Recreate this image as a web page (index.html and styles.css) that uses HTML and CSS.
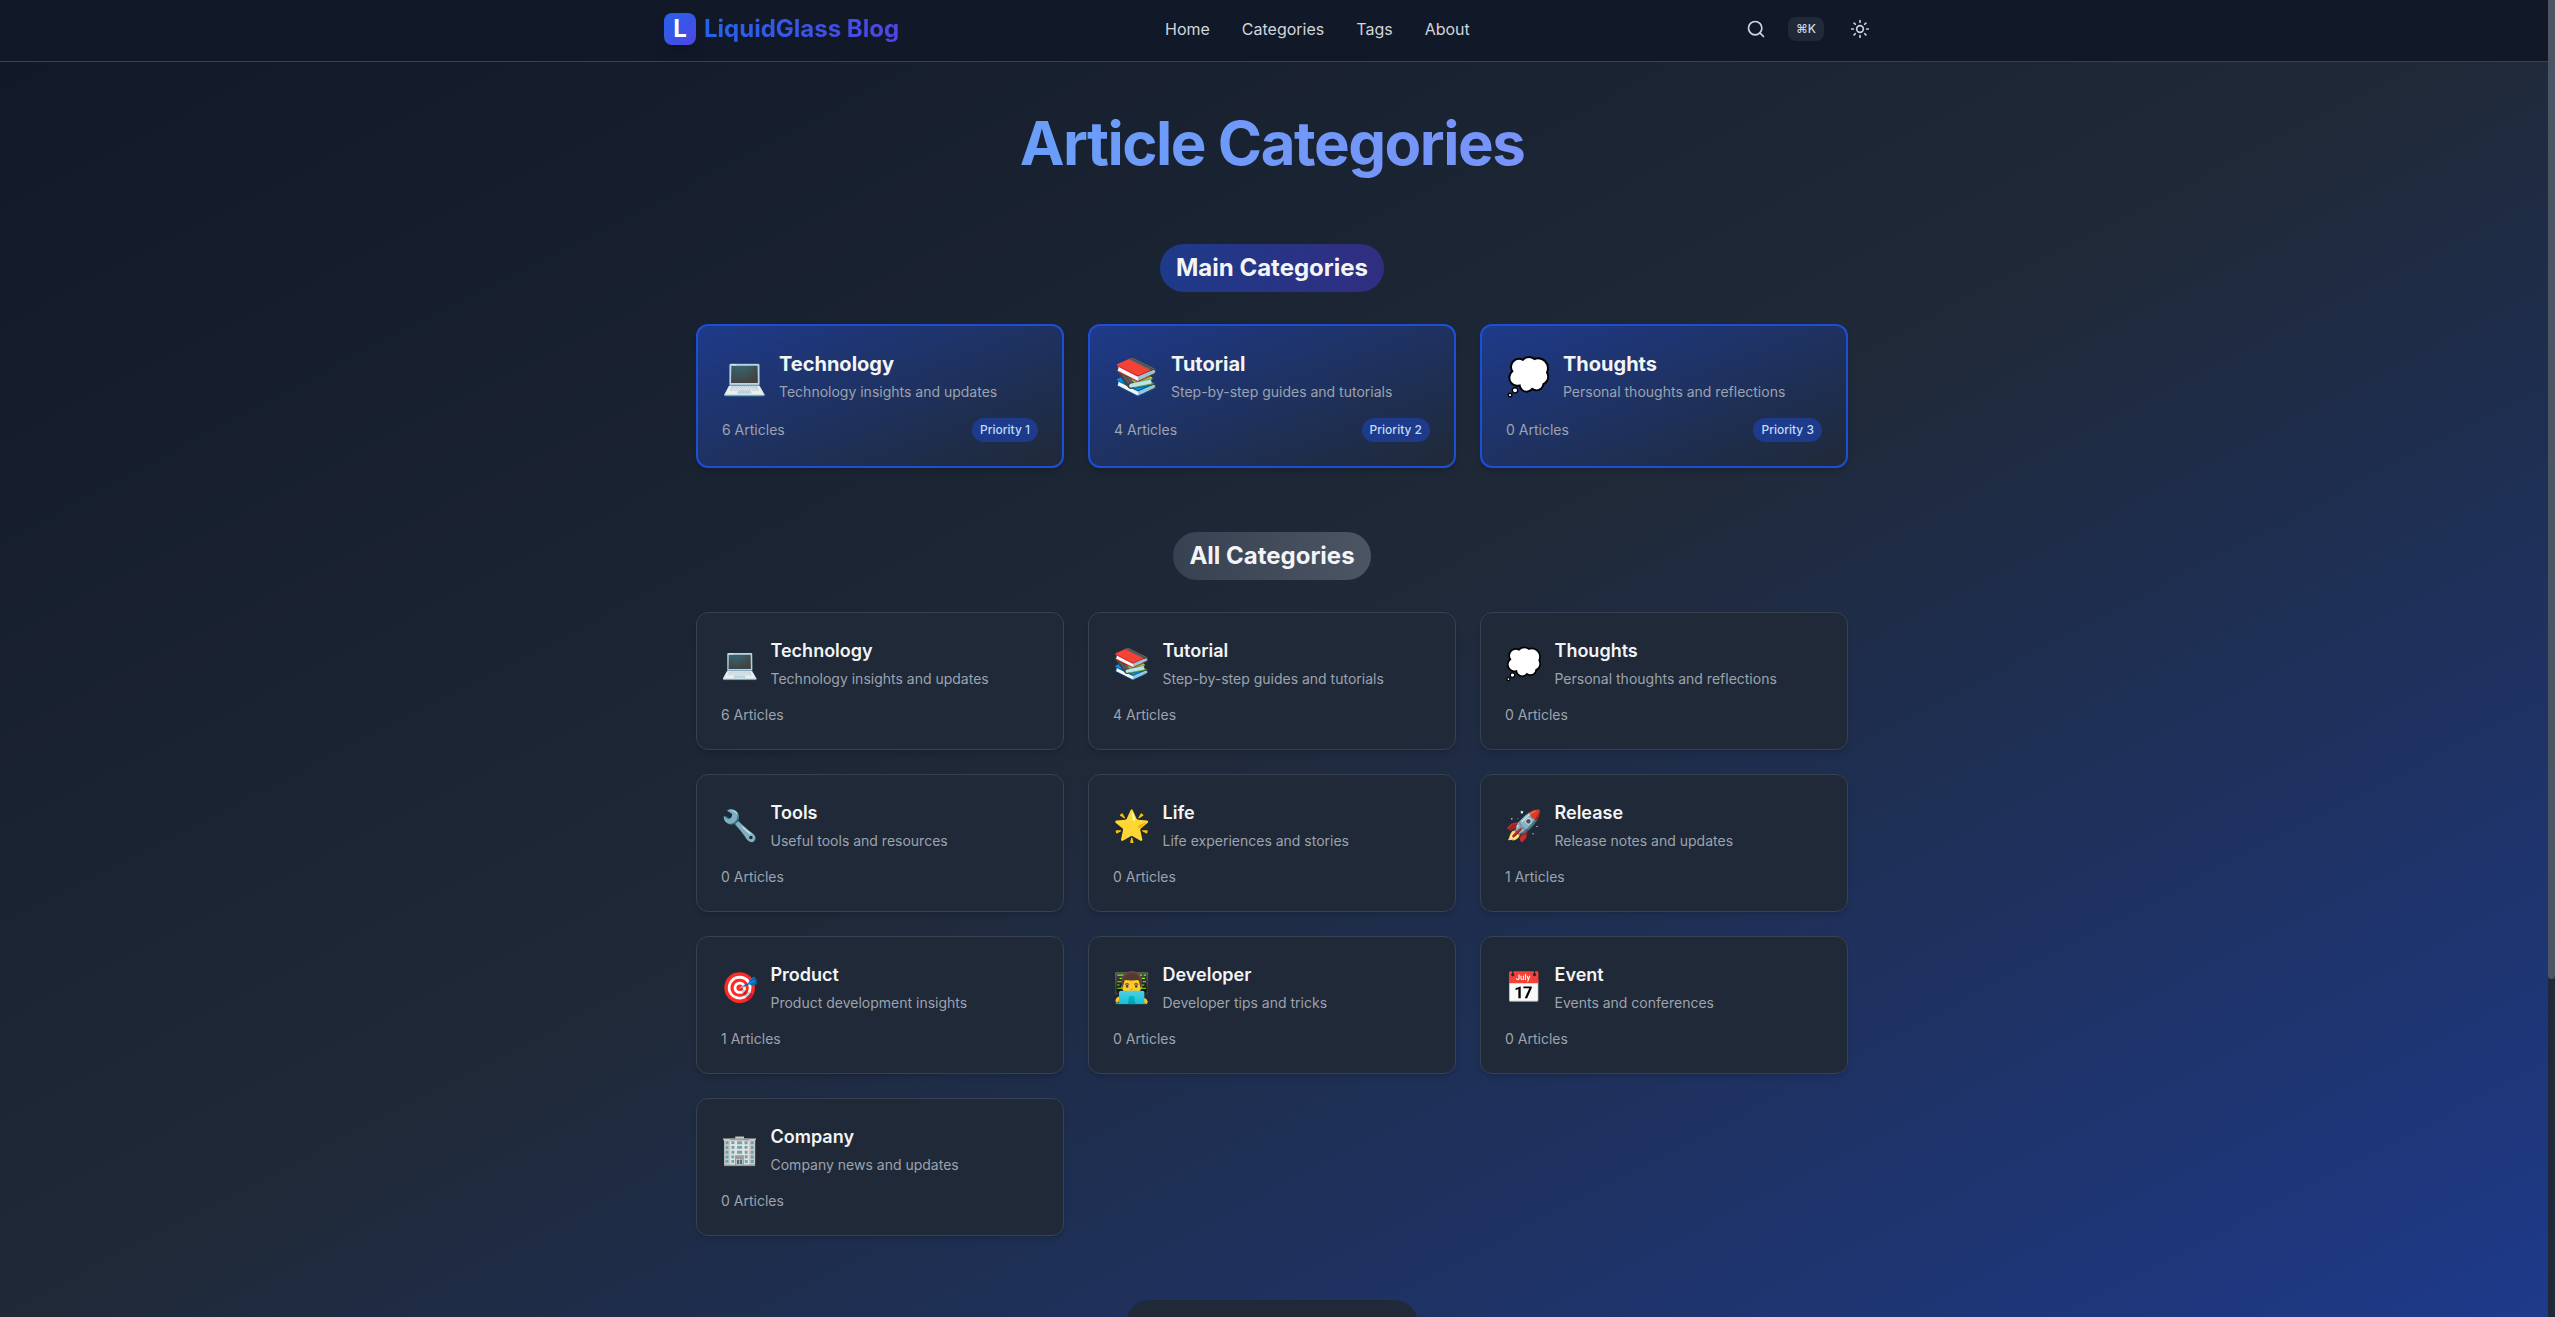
FILE: index.html
```html
<!DOCTYPE html>
<html lang="en">
<head>
<meta charset="utf-8">
<title>Article Categories - LiquidGlass Blog</title>
<link rel="stylesheet" href="styles.css">
</head>
<body>
<div class="page">
  <header class="header">
    <div class="header-inner">
      <a class="brand"><span class="brand-mark">L</span><span class="brand-name">LiquidGlass Blog</span></a>
      <nav class="nav"><a>Home</a><a>Categories</a><a>Tags</a><a>About</a></nav>
      <div class="actions">
        <svg class="icon" viewBox="0 0 24 24"><circle cx="11" cy="11" r="8"/><path d="M21 21l-4.34-4.34"/></svg>
        <kbd class="kbd">⌘K</kbd>
        <svg class="icon icon-sun" viewBox="0 0 24 24"><circle cx="12" cy="12" r="4"/><path d="M12 2v2M12 20v2M4.93 4.93l1.41 1.41M17.66 17.66l1.41 1.41M2 12h2M20 12h2M6.34 17.66l-1.41 1.41M19.07 4.93l-1.41 1.41"/></svg>
      </div>
    </div>
  </header>
  <main class="main">
    <h1 class="title">Article Categories</h1>
    <section class="section">
      <h2 class="pill pill-main">Main Categories</h2>
      <div class="grid">
        <article class="card card-main"><div class="card-head"><span class="emoji">💻</span><div><h3>Technology</h3><p>Technology insights and updates</p></div></div><div class="card-foot"><span>6 Articles</span><span class="badge">Priority 1</span></div></article>
        <article class="card card-main"><div class="card-head"><span class="emoji">📚</span><div><h3>Tutorial</h3><p>Step-by-step guides and tutorials</p></div></div><div class="card-foot"><span>4 Articles</span><span class="badge">Priority 2</span></div></article>
        <article class="card card-main"><div class="card-head"><span class="emoji">💭</span><div><h3>Thoughts</h3><p>Personal thoughts and reflections</p></div></div><div class="card-foot"><span>0 Articles</span><span class="badge">Priority 3</span></div></article>
      </div>
    </section>
    <section class="section">
      <h2 class="pill pill-all">All Categories</h2>
      <div class="grid">
        <article class="card"><div class="card-head"><span class="emoji">💻</span><div><h3>Technology</h3><p>Technology insights and updates</p></div></div><div class="card-foot"><span>6 Articles</span></div></article>
        <article class="card"><div class="card-head"><span class="emoji">📚</span><div><h3>Tutorial</h3><p>Step-by-step guides and tutorials</p></div></div><div class="card-foot"><span>4 Articles</span></div></article>
        <article class="card"><div class="card-head"><span class="emoji">💭</span><div><h3>Thoughts</h3><p>Personal thoughts and reflections</p></div></div><div class="card-foot"><span>0 Articles</span></div></article>
        <article class="card"><div class="card-head"><span class="emoji">🔧</span><div><h3>Tools</h3><p>Useful tools and resources</p></div></div><div class="card-foot"><span>0 Articles</span></div></article>
        <article class="card"><div class="card-head"><span class="emoji">🌟</span><div><h3>Life</h3><p>Life experiences and stories</p></div></div><div class="card-foot"><span>0 Articles</span></div></article>
        <article class="card"><div class="card-head"><span class="emoji">🚀</span><div><h3>Release</h3><p>Release notes and updates</p></div></div><div class="card-foot"><span>1 Articles</span></div></article>
        <article class="card"><div class="card-head"><span class="emoji">🎯</span><div><h3>Product</h3><p>Product development insights</p></div></div><div class="card-foot"><span>1 Articles</span></div></article>
        <article class="card"><div class="card-head"><span class="emoji">👨‍💻</span><div><h3>Developer</h3><p>Developer tips and tricks</p></div></div><div class="card-foot"><span>0 Articles</span></div></article>
        <article class="card"><div class="card-head"><span class="emoji">📅</span><div><h3>Event</h3><p>Events and conferences</p></div></div><div class="card-foot"><span>0 Articles</span></div></article>
        <article class="card"><div class="card-head"><span class="emoji">🏢</span><div><h3>Company</h3><p>Company news and updates</p></div></div><div class="card-foot"><span>0 Articles</span></div></article>
      </div>
    </section>
    <div class="summary"></div>
  </main>
</div>
<div class="scrollbar"><div class="scrollbar-thumb"></div></div>
</body>
</html>
```
FILE: styles.css
```css
* { box-sizing: border-box; margin: 0; padding: 0; }
html, body { height: 100%; overflow: hidden; }
body {
  display: flex;
  font-family: Inter, "Noto Sans", sans-serif;
  font-size: 16px;
  line-height: 24px;
  color: #f3f4f6;
  background: #111827;
}
.page {
  flex: 1;
  height: 1317px;
  overflow: hidden;
  background: linear-gradient(to bottom right, #111827, #1f2937, #1e3a8a);
}
.header {
  height: 62px;
  padding-right: 4px;
  background: #111827;
  border-bottom: 1px solid #374151;
}
.header-inner {
  display: flex;
  align-items: center;
  justify-content: space-between;
  width: 1280px;
  height: 58px;
  margin: 0 auto;
  padding: 0 32px;
}
.brand { display: flex; align-items: center; gap: 8px; width: 501px; }
.brand-mark {
  width: 32px;
  height: 32px;
  border-radius: 8px;
  background: linear-gradient(to bottom right, #2563eb, #4f46e5);
  box-shadow: 0 10px 15px -3px rgba(0, 0, 0, .1), 0 4px 6px -4px rgba(0, 0, 0, .1);
  color: #fff;
  font-size: 24px;
  font-weight: 700;
  line-height: 32px;
  text-align: center;
}
.brand-name {
  font-size: 24px;
  font-weight: 700;
  line-height: 32px;
  color: transparent;
  background: linear-gradient(to right, #2563eb, #4f46e5);
  -webkit-background-clip: text;
  background-clip: text;
}
.nav { display: flex; gap: 32px; flex: 1; color: #d1d5db; }
.actions { display: flex; align-items: center; color: #d1d5db; }
.icon {
  width: 20px;
  height: 20px;
  fill: none;
  stroke: currentColor;
  stroke-width: 2;
  stroke-linecap: round;
  stroke-linejoin: round;
}
.kbd {
  width: 36px;
  margin: 0 26px 0 22px;
  padding: 4px 0;
  border-radius: 8px;
  background: #1f2937;
  font: 500 12px/16px Inter, "Noto Sans", sans-serif;
  text-align: center;
}
.icon-sun { margin-right: 10px; }
.main { width: 1156px; margin: 0 auto; padding: 43px 4px 0 0; }
.title {
  padding: 8px 0;
  font-size: 60px;
  font-weight: 700;
  line-height: 60px;
  letter-spacing: -1.5px;
  text-align: center;
  color: transparent;
  background: linear-gradient(to right, #60a5fa, #818cf8);
  -webkit-background-clip: text;
  background-clip: text;
}
.section { margin-top: 63px; }
.section + .section { margin-top: 64px; }
.pill {
  width: max-content;
  margin: 0 auto 32px;
  padding: 8px 16px;
  border-radius: 24px;
  font-size: 24px;
  font-weight: 700;
  line-height: 32px;
}
.pill-main { background: linear-gradient(to right, #1e3a8a, #312e81); }
.pill-all { background: linear-gradient(to right, #374151, #4b5563); }
.grid { display: grid; grid-template-columns: repeat(3, 368px); gap: 24px; }
.card {
  height: 138px;
  padding: 24px;
  border: 1px solid #374151;
  border-radius: 12px;
  background: #1f2937;
  box-shadow: 0 4px 6px -1px rgba(0, 0, 0, .1), 0 2px 4px -2px rgba(0, 0, 0, .1);
}
.card-main {
  height: 144px;
  border: 2px solid #1d4ed8;
  background: linear-gradient(to bottom right, #1e3a8a, #1f2937);
}
.card-head { display: flex; align-items: center; gap: 12.5px; }
.card-main .card-head { gap: 12px; }
.emoji { font-size: 30px; line-height: 36px; }
.card-main .emoji { font-size: 36px; line-height: 40px; }
.card h3 { font-size: 18px; font-weight: 600; line-height: 28px; }
.card-main h3 { font-size: 20px; font-weight: 700; }
.card p { margin-top: 4px; font-size: 14px; line-height: 20px; color: #9ca3af; }
.card-foot {
  display: flex;
  align-items: center;
  justify-content: space-between;
  margin-top: 16px;
  font-size: 14px;
  line-height: 20px;
  color: #9ca3af;
}
.badge {
  padding: 4px 8px;
  border-radius: 12px;
  background: #1e3a8a;
  color: #bfdbfe;
  font-size: 12px;
  font-weight: 500;
  line-height: 16px;
}
.summary {
  width: 292px;
  height: 100px;
  margin: 64px auto 0;
  border-radius: 24px;
  background: #1f2937;
}
.scrollbar { width: 7px; height: 1317px; background: #1f2937; }
.scrollbar-thumb { height: 979px; border-radius: 0 0 4px 4px; background: #4b5563; }
```
